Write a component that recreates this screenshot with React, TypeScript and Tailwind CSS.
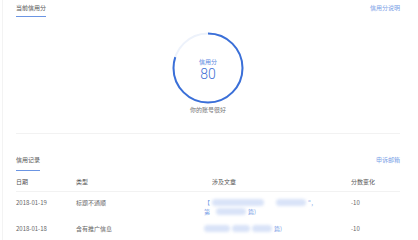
import React from 'react';

const font = { fontFamily: '"Noto Sans CJK SC", "Noto Sans", sans-serif' };

const records = [
  { date: '2018-01-19', type: '标题不通顺', score: '-10', lines: 2 },
  { date: '2018-01-18', type: '含有推广信息', score: '-10', lines: 1 },
];

const Blur: React.FC<{ w: string }> = ({ w }) => (
  <span className={`inline-block h-[7px] ${w} bg-[#d9e3f8] blur-[1.5px] rounded-sm align-middle`} />
);

const ScoreRing: React.FC<{ score: number }> = ({ score }) => {
  const r = 34.5;
  const c = 2 * Math.PI * r;
  return (
    <div className="relative w-[72px] h-[72px] mx-auto">
      <svg width="72" height="72" viewBox="0 0 72 72">
        <circle cx="36" cy="36" r={r} fill="none" stroke="#edf2fb" strokeWidth="2" />
        <circle
          cx="36"
          cy="36"
          r={r}
          fill="none"
          stroke="#3a6fd8"
          strokeWidth="2"
          strokeDasharray={`${(c * score) / 100} ${c}`}
          transform="rotate(-90 36 36)"
        />
      </svg>
      <div className="absolute inset-0 flex flex-col items-center pt-[26px]">
        <span className="text-[6px] leading-[8px] text-[#5b87e0]">信用分</span>
        <span className="text-[14px] leading-[14px] mt-[1px] text-[#3f6fd4] font-light" style={{ fontFamily: 'Roboto, sans-serif' }}>
          {score}
        </span>
      </div>
    </div>
  );
};

export default function App() {
  return (
    <div className="w-[418px] h-[240px] bg-white overflow-hidden flex" style={font}>
      <div className="w-[2px] flex-shrink-0" />
      <div className="flex-1 border-l border-[#f3f3f3] pl-[13px] pr-[18px] flex flex-col">
        {/* current score */}
        <div className="flex items-start justify-between">
          <div className="pt-[4px] pb-[4px] border-b border-[#6b95e3] text-[6px] leading-[8px] text-[#555]">当前信用分</div>
          <div className="pt-[4px] text-[6px] leading-[8px] text-[#7aa0e6]">信用分说明</div>
        </div>
        <div className="mt-[15px]">
          <ScoreRing score={80} />
        </div>
        <div className="mt-[2px] text-center text-[6px] leading-[8px] text-[#777]">你的账号很好</div>
        <div className="mt-[19px] border-t border-[#f2f2f2]" />

        {/* records */}
        <div className="flex items-start justify-between pt-[22px]">
          <div className="pb-[6px] border-b border-[#6b95e3] text-[6px] leading-[8px] text-[#555]">信用记录</div>
          <div className="text-[6px] leading-[8px] text-[#7aa0e6]">申诉邮箱</div>
        </div>
        <div className="mt-[7px] pb-[5px] border-b border-[#f2f2f2] flex text-[6px] leading-[8px] text-[#555]">
          <div className="w-[60px]">日期</div>
          <div className="w-[136px]">类型</div>
          <div className="w-[139px]">涉及文章</div>
          <div>分数变化</div>
        </div>
        {records.map((r, i) => (
          <div key={r.date} className={`flex text-[6px] leading-[9px] text-[#666] ${i === 0 ? 'pt-[6px] h-[32px]' : ''}`}>
            <div className="w-[60px]">{r.date}</div>
            <div className="w-[128px]">{r.type}</div>
            <div className="w-[147px] text-[#7aa0e6]">
              {r.lines === 2 ? (
                <>
                  <div className="flex items-center gap-[2px]">
                    <span>【</span>
                    <Blur w="w-[52px]" />
                    <Blur w="w-[30px] ml-[10px]" />
                    <span>"，</span>
                  </div>
                  <div className="flex items-center gap-[2px]">
                    <span>第</span>
                    <Blur w="w-[30px] ml-[4px]" />
                    <span>篇)</span>
                  </div>
                </>
              ) : (
                <div className="flex items-center gap-[2px]">
                  <Blur w="w-[26px]" />
                  <Blur w="w-[18px]" />
                  <Blur w="w-[20px]" />
                  <span>篇)</span>
                </div>
              )}
            </div>
            <div>{r.score}</div>
          </div>
        ))}
      </div>
    </div>
  );
}
